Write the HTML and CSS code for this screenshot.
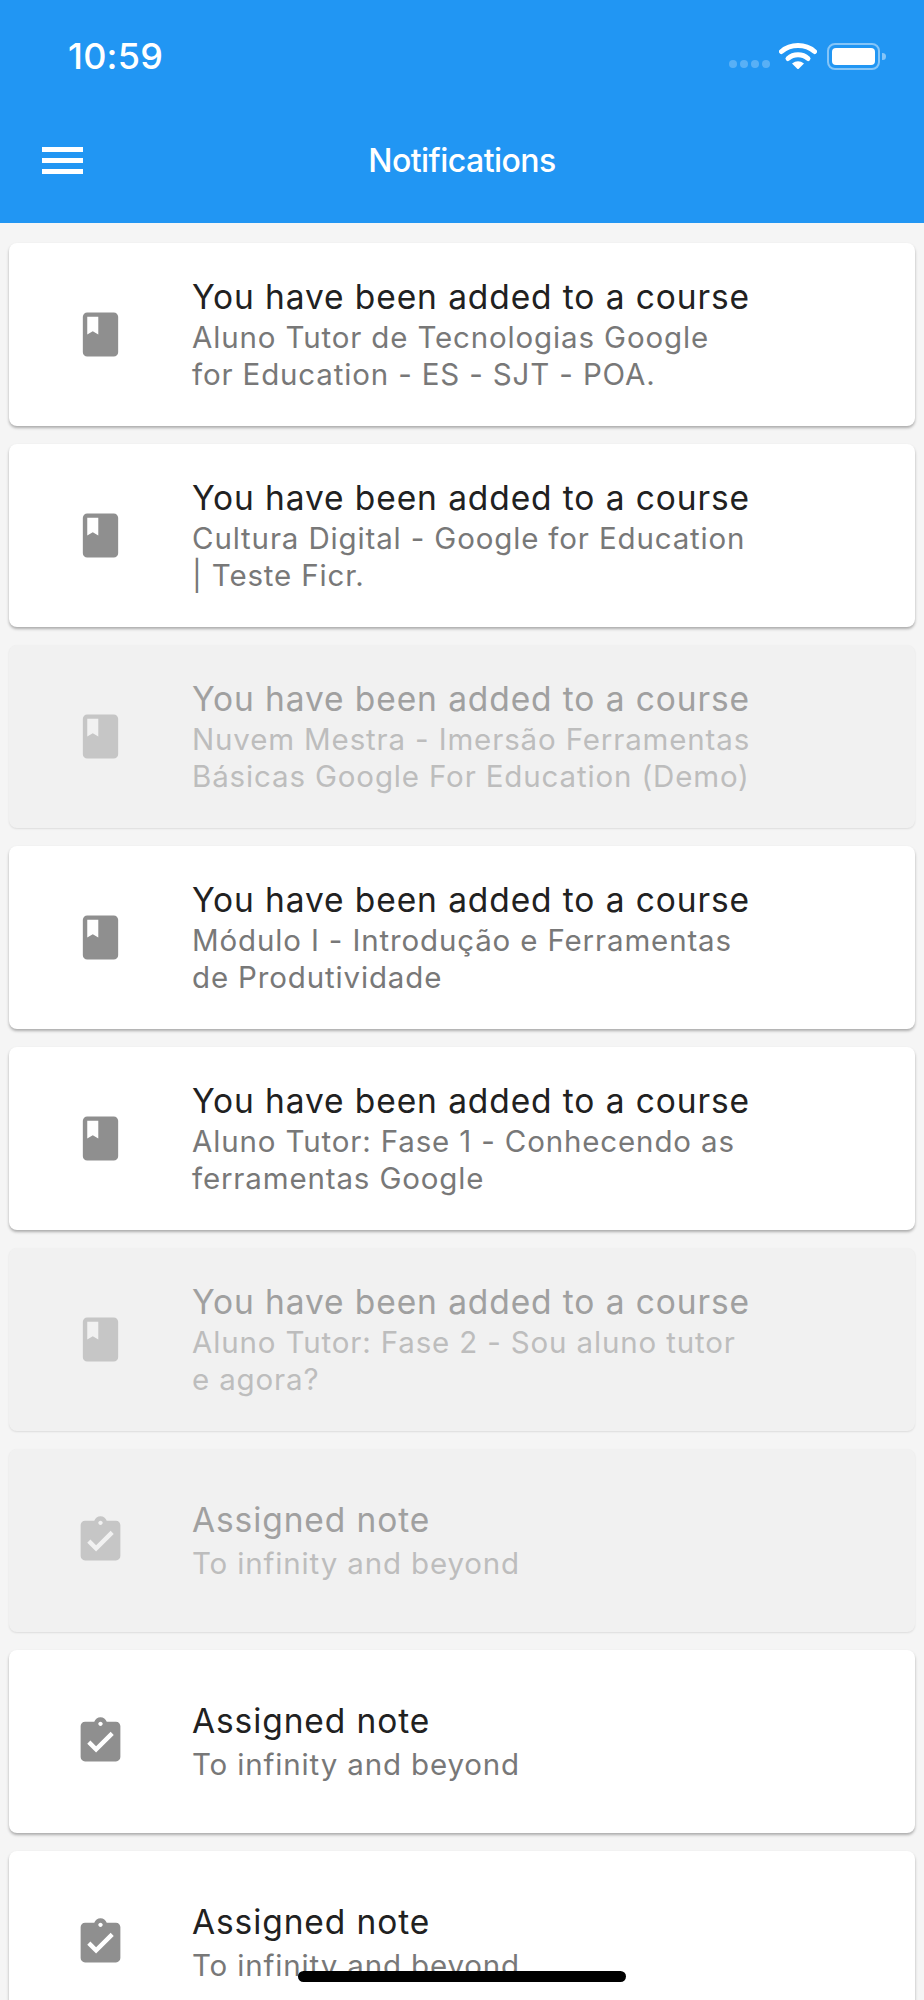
FILE: index.html
```html
<!DOCTYPE html>
<html lang="en">
<head>
<meta charset="utf-8">
<title>Notifications</title>
<link rel="stylesheet" href="styles.css">
</head>
<body>
<svg class="defs" width="0" height="0" aria-hidden="true">
  <symbol id="book" viewBox="0 0 24 24"><path d="M18 2H6c-1.1 0-2 .9-2 2v16c0 1.1.9 2 2 2h12c1.1 0 2-.9 2-2V4c0-1.1-.9-2-2-2zM6 4h5v8l-2.5-1.5L6 12V4z" fill-rule="evenodd"/></symbol>
  <symbol id="note" viewBox="0 0 24 24"><path d="M19 3h-4.18C14.4 1.84 13.3 1 12 1c-1.3 0-2.4.84-2.82 2H5c-1.1 0-2 .9-2 2v14c0 1.1.9 2 2 2h14c1.1 0 2-.9 2-2V5c0-1.1-.9-2-2-2zm-7 0c.55 0 1 .45 1 1s-.45 1-1 1-1-.45-1-1 .45-1 1-1zm-2 14l-4-4 1.41-1.41L10 14.17l6.59-6.59L18 9l-8 8z"/></symbol>
</svg>
<div class="app">
  <header class="header">
    <div class="status">
      <span class="time">10:59</span>
      <div class="status-icons">
        <div class="dots"><i></i><i></i><i></i><i></i></div>
        <svg class="wifi" viewBox="0 0 38 26"><path class="wifi-arc" d="M2.500 8.500C11.500 .5 26.500 .5 35.500 8.500"/><path class="wifi-arc" d="M9 15.500C14.500 10.500 23.500 10.500 29 15.500"/><path class="wifi-dot" d="M13 20.500Q19 16 25 20.500L19 26.500Z"/></svg>
        <div class="battery"><div class="battery-fill"></div></div>
        <div class="battery-nub"></div>
      </div>
    </div>
    <div class="toolbar">
      <svg class="menu" viewBox="0 0 41 27"><rect width="41" height="5"/><rect y="11" width="41" height="5"/><rect y="22" width="41" height="5"/></svg>
      <h1 class="page-title">Notifications</h1>
    </div>
  </header>
  <main class="list">
    <article class="card">
      <svg class="icon"><use href="#book"/></svg>
      <div class="text"><div class="title">You have been added to a course</div><div class="sub">Aluno Tutor de Tecnologias Google<br>for Education - ES - SJT - POA.</div></div>
    </article>
    <article class="card">
      <svg class="icon"><use href="#book"/></svg>
      <div class="text"><div class="title">You have been added to a course</div><div class="sub">Cultura Digital - Google for Education<br>| Teste Ficr.</div></div>
    </article>
    <article class="card read">
      <svg class="icon"><use href="#book"/></svg>
      <div class="text"><div class="title">You have been added to a course</div><div class="sub">Nuvem Mestra - Imersão Ferramentas<br>Básicas Google For Education (Demo)</div></div>
    </article>
    <article class="card">
      <svg class="icon"><use href="#book"/></svg>
      <div class="text"><div class="title">You have been added to a course</div><div class="sub">Módulo I - Introdução e Ferramentas<br>de Produtividade</div></div>
    </article>
    <article class="card">
      <svg class="icon"><use href="#book"/></svg>
      <div class="text"><div class="title">You have been added to a course</div><div class="sub">Aluno Tutor: Fase 1 - Conhecendo as<br>ferramentas Google</div></div>
    </article>
    <article class="card read">
      <svg class="icon"><use href="#book"/></svg>
      <div class="text"><div class="title">You have been added to a course</div><div class="sub">Aluno Tutor: Fase 2 - Sou aluno tutor<br>e agora?</div></div>
    </article>
    <article class="card read">
      <svg class="icon"><use href="#note"/></svg>
      <div class="text"><div class="title">Assigned note</div><div class="sub single">To infinity and beyond</div></div>
    </article>
    <article class="card">
      <svg class="icon"><use href="#note"/></svg>
      <div class="text"><div class="title">Assigned note</div><div class="sub single">To infinity and beyond</div></div>
    </article>
    <article class="card">
      <svg class="icon"><use href="#note"/></svg>
      <div class="text"><div class="title">Assigned note</div><div class="sub single">To infinity and beyond</div></div>
    </article>
  </main>
  <div class="home-indicator"></div>
</div>
</body>
</html>
```
FILE: styles.css
```css
* { box-sizing: border-box; }
html, body { margin: 0; padding: 0; }
body { font-family: Inter, "Noto Sans", sans-serif; background: #f5f5f5; }
.defs { position: absolute; }
.app { position: relative; width: 924px; height: 2000px; overflow: hidden; background: #f5f5f5; }

.header { height: 223px; background: #2196f3; color: #fff; }
.status { height: 112px; display: flex; align-items: center; justify-content: space-between; padding: 0 38px 0 68px; }
.time { font-size: 36px; font-weight: 500; letter-spacing: 0.2px; }
.status-icons { display: flex; align-items: center; }
.dots { display: flex; gap: 3px; margin-top: 16px; margin-right: 9px; }
.dots i { width: 8px; height: 8px; border-radius: 50%; background: rgba(255, 255, 255, .25); }
.wifi { width: 38px; height: 26px; margin-right: 10px; }
.wifi-arc { fill: none; stroke: #fff; stroke-width: 5; stroke-linecap: round; }
.wifi-dot { fill: #fff; }
.battery { width: 53px; height: 27px; padding: 3px; border: 2px solid rgba(255, 255, 255, .45); border-radius: 8px; }
.battery-fill { width: 100%; height: 100%; background: #fff; border-radius: 4px; }
.battery-nub { width: 4px; height: 7px; margin-left: 2px; background: rgba(255, 255, 255, .45); border-radius: 0 4px 4px 0; }

.toolbar { position: relative; height: 96px; display: flex; align-items: center; justify-content: center; }
.menu { position: absolute; left: 42px; top: 35px; width: 41px; height: 27px; fill: #fff; }
.page-title { margin: 0; font-size: 32px; font-weight: 500; letter-spacing: -0.55px; }

.list { display: flex; flex-direction: column; gap: 18px; padding: 20px 9px 0; }
.card { flex: none; height: 183px; display: flex; align-items: center; padding-left: 65px; background: #fff; border-radius: 8px; box-shadow: 0 2px 3px rgba(0, 0, 0, .3); }
.icon { flex: none; width: 53px; height: 53px; margin-right: 65px; fill: #8f8f8f; }
.text { white-space: nowrap; margin-top: -1px; }
.title { font-size: 33.500px; line-height: 42px; color: #212121; letter-spacing: .9px; }
.sub { margin-top: 1px; font-size: 29.500px; line-height: 37px; color: #787878; letter-spacing: .85px; }
.sub.single { margin-top: 4px; }

.read { background: #f1f1f1; box-shadow: 0 1px 2px rgba(0, 0, 0, .1); }
.read .icon { fill: #c6c6c6; }
.read .title { color: #a0a0a0; }
.read .sub { color: #bdbdbd; }

.home-indicator { position: absolute; left: 298px; top: 1971px; width: 328px; height: 11px; background: #000; border-radius: 6px; }
```
